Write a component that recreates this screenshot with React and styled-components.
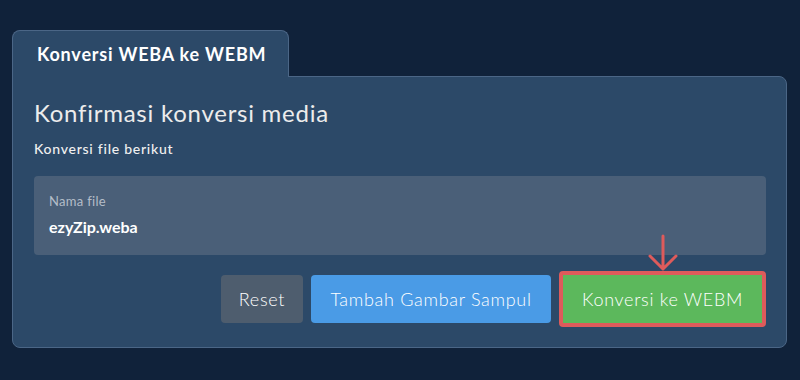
import React from "react";
import styled, { createGlobalStyle } from "styled-components";

const GlobalStyle = createGlobalStyle`
  html, body {
    margin: 0;
    padding: 0;
    background: #10223a;
    font-family: Lato, "Open Sans", sans-serif;
  }
`;

const Page = styled.div`
  width: 800px;
  height: 380px;
  box-sizing: border-box;
  padding: 30px 13px 0 12px;
`;

const Tab = styled.div`
  display: inline-flex;
  align-items: center;
  box-sizing: border-box;
  height: 47px;
  width: 277px;
  padding-left: 24px;
  margin-bottom: -1px;
  position: relative;
  z-index: 1;
  background: #2c4968;
  border: 1px solid #4b6686;
  border-bottom: none;
  border-radius: 8px 8px 0 0;
  color: #ffffff;
  font-size: 18px;
  font-weight: 700;
  letter-spacing: 0.8px;
`;

const Panel = styled.section`
  box-sizing: border-box;
  height: 272px;
  padding: 21px 20px 20px 21px;
  background: #2c4968;
  border: 1px solid #4b6686;
  border-radius: 0 8px 8px 8px;
`;

const Heading = styled.h2`
  margin: 0;
  font-size: 24px;
  line-height: 29px;
  font-weight: 400;
  letter-spacing: 0.75px;
  color: #ececec;
`;

const Subtitle = styled.p`
  margin: 12px 0 17px;
  font-size: 14px;
  line-height: 20px;
  font-weight: 500;
  letter-spacing: 0.75px;
  color: #f0f0f0;
`;

const FileBox = styled.div`
  display: flex;
  flex-direction: column;
  gap: 6px;
  box-sizing: border-box;
  height: 79px;
  padding: 16px 15px;
  background: #4a5f78;
  border-radius: 4px;
`;

const Label = styled.span`
  font-size: 13px;
  line-height: 18px;
  letter-spacing: 0.3px;
  color: #b4bdc8;
`;

const Value = styled.span`
  font-size: 16px;
  line-height: 22px;
  font-weight: 700;
  color: #ffffff;
`;

const Actions = styled.div`
  display: flex;
  justify-content: flex-end;
  align-items: center;
  gap: 8px;
  margin-top: 16px;
`;

const COLORS = {
  muted: "#4e5d6e",
  info: "#4a9be6",
  success: "#5cb85c",
};

const Button = styled.button`
  position: relative;
  box-sizing: border-box;
  height: ${({ $highlight }) => ($highlight ? "56px" : "48px")};
  padding: 0;
  border: ${({ $highlight }) => ($highlight ? "4px solid #de5b5b" : "none")};
  border-radius: 4px;
  background: ${({ $variant }) => COLORS[$variant]};
  color: #ffffff;
  font-family: Lato, "Open Sans", sans-serif;
  font-size: 18px;
  font-weight: 300;
  letter-spacing: 0.7px;
  cursor: pointer;
`;

const Arrow = styled.svg`
  position: absolute;
  left: 50%;
  top: -40px;
  transform: translateX(-50%);
  overflow: visible;
`;

export default function App() {
  return (
    <>
      <GlobalStyle />
      <Page>
        <Tab>Konversi WEBA ke WEBM</Tab>
        <Panel>
          <Heading>Konfirmasi konversi media</Heading>
          <Subtitle>Konversi file berikut</Subtitle>
          <FileBox>
            <Label>Nama file</Label>
            <Value>ezyZip.weba</Value>
          </FileBox>
          <Actions>
            <Button type="button" $variant="muted" style={{ width: 82 }}>Reset</Button>
            <Button type="button" $variant="info" style={{ width: 240 }}>Tambah Gambar Sampul</Button>
            <Button type="button" $variant="success" $highlight style={{ width: 207 }}>
              <Arrow width="28" height="36" viewBox="0 0 28 36">
                <path
                  d="M14 1 V34 M1 21 L14 34 L27 21"
                  fill="none"
                  stroke="#de5b5b"
                  strokeWidth="3"
                  strokeLinecap="round"
                  strokeLinejoin="round"
                />
              </Arrow>
              Konversi ke WEBM
            </Button>
          </Actions>
        </Panel>
      </Page>
    </>
  );
}
